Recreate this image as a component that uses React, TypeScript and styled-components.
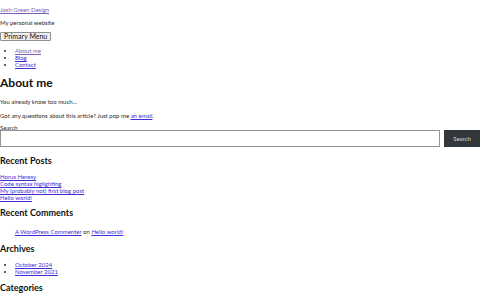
import styled, { createGlobalStyle } from 'styled-components';

const GlobalStyle = createGlobalStyle`
  body {
    margin: 0;
    background: #fff;
    font-family: Lato, 'Liberation Sans', sans-serif;
    font-size: 6px;
    line-height: 7px;
    color: #2a2a2a;
  }
`;

const Page = styled.div`
  display: flex;
  flex-direction: column;
  align-items: flex-start;
  padding-top: 6px;
`;

const Link = styled.a<{ $visited?: boolean }>`
  color: ${(p) => (p.$visited ? '#7b5fb3' : '#3d2fd4')};
  text-decoration: underline;
`;

const Para = styled.p<{ $top?: number }>`
  margin: ${(p) => p.$top ?? 6}px 0 0;
`;

const MenuButton = styled.button`
  display: flex;
  align-items: center;
  margin-top: 6px;
  height: 9px;
  padding: 0 3px;
  font-family: inherit;
  font-size: 7px;
  line-height: 7px;
  color: #111;
  background: #efefef;
  border: 1px solid #8f8f8f;
  border-radius: 1px;
`;

const BulletList = styled.ul<{ $top?: number }>`
  margin: ${(p) => p.$top ?? 6}px 0 0;
  padding-left: 15px;
  list-style: disc;
`;

const PlainList = styled.ul`
  margin: 7px 0 0;
  padding: 0;
  list-style: none;
`;

const Title = styled.h1`
  margin: 8px 0 0;
  font-size: 12px;
  line-height: 14px;
  font-weight: 700;
  color: #111;
`;

const WidgetTitle = styled.h2<{ $top?: number }>`
  margin: ${(p) => p.$top ?? 6}px 0 0;
  font-size: 9px;
  line-height: 10px;
  font-weight: 700;
  color: #111;
`;

const SearchForm = styled.form`
  width: 100%;
  margin-top: 5px;
`;

const SearchLabel = styled.label`
  display: block;
`;

const SearchRow = styled.div`
  display: flex;
  gap: 4px;
  margin-top: -1px;
`;

const SearchInput = styled.input`
  flex: 1;
  height: 17px;
  box-sizing: border-box;
  border: 1px solid #949494;
  padding: 0 4px;
  font-family: inherit;
`;

const SearchButton = styled.button`
  width: 36px;
  height: 17px;
  border: none;
  background: #32373c;
  color: #ddd;
  font-family: inherit;
  font-size: 6px;
`;

const CommentList = styled.ol`
  margin: 10px 0 0;
  padding-left: 15px;
  list-style: none;
`;

export default function App() {
  return (
    <>
      <GlobalStyle />
      <Page>
        <Para $top={0}>
          <Link $visited href="#">Josh Green Design</Link>
        </Para>
        <Para>My personal website</Para>
        <MenuButton>Primary Menu</MenuButton>
        <BulletList>
          <li><Link $visited href="#">About me</Link></li>
          <li><Link href="#">Blog</Link></li>
          <li><Link href="#">Contact</Link></li>
        </BulletList>
        <Title>About me</Title>
        <Para $top={8}>You already know too much...</Para>
        <Para $top={7}>
          Got any questions about this article? Just pop me <Link href="#">an email</Link>.
        </Para>
        <SearchForm>
          <SearchLabel>Search</SearchLabel>
          <SearchRow>
            <SearchInput />
            <SearchButton type="button">Search</SearchButton>
          </SearchRow>
        </SearchForm>
        <WidgetTitle $top={9}>Recent Posts</WidgetTitle>
        <PlainList>
          <li><Link href="#">Horus Heresy</Link></li>
          <li><Link href="#">Code syntax higlighting</Link></li>
          <li><Link href="#">My (probably not) first blog post</Link></li>
          <li><Link href="#">Hello world!</Link></li>
        </PlainList>
        <WidgetTitle $top={7}>Recent Comments</WidgetTitle>
        <CommentList>
          <li>
            <Link href="#">A WordPress Commenter</Link> on <Link href="#">Hello world!</Link>
          </li>
        </CommentList>
        <WidgetTitle $top={9}>Archives</WidgetTitle>
        <BulletList $top={7}>
          <li><Link href="#">October 2024</Link></li>
          <li><Link href="#">November 2021</Link></li>
        </BulletList>
        <WidgetTitle $top={8}>Categories</WidgetTitle>
      </Page>
    </>
  );
}
